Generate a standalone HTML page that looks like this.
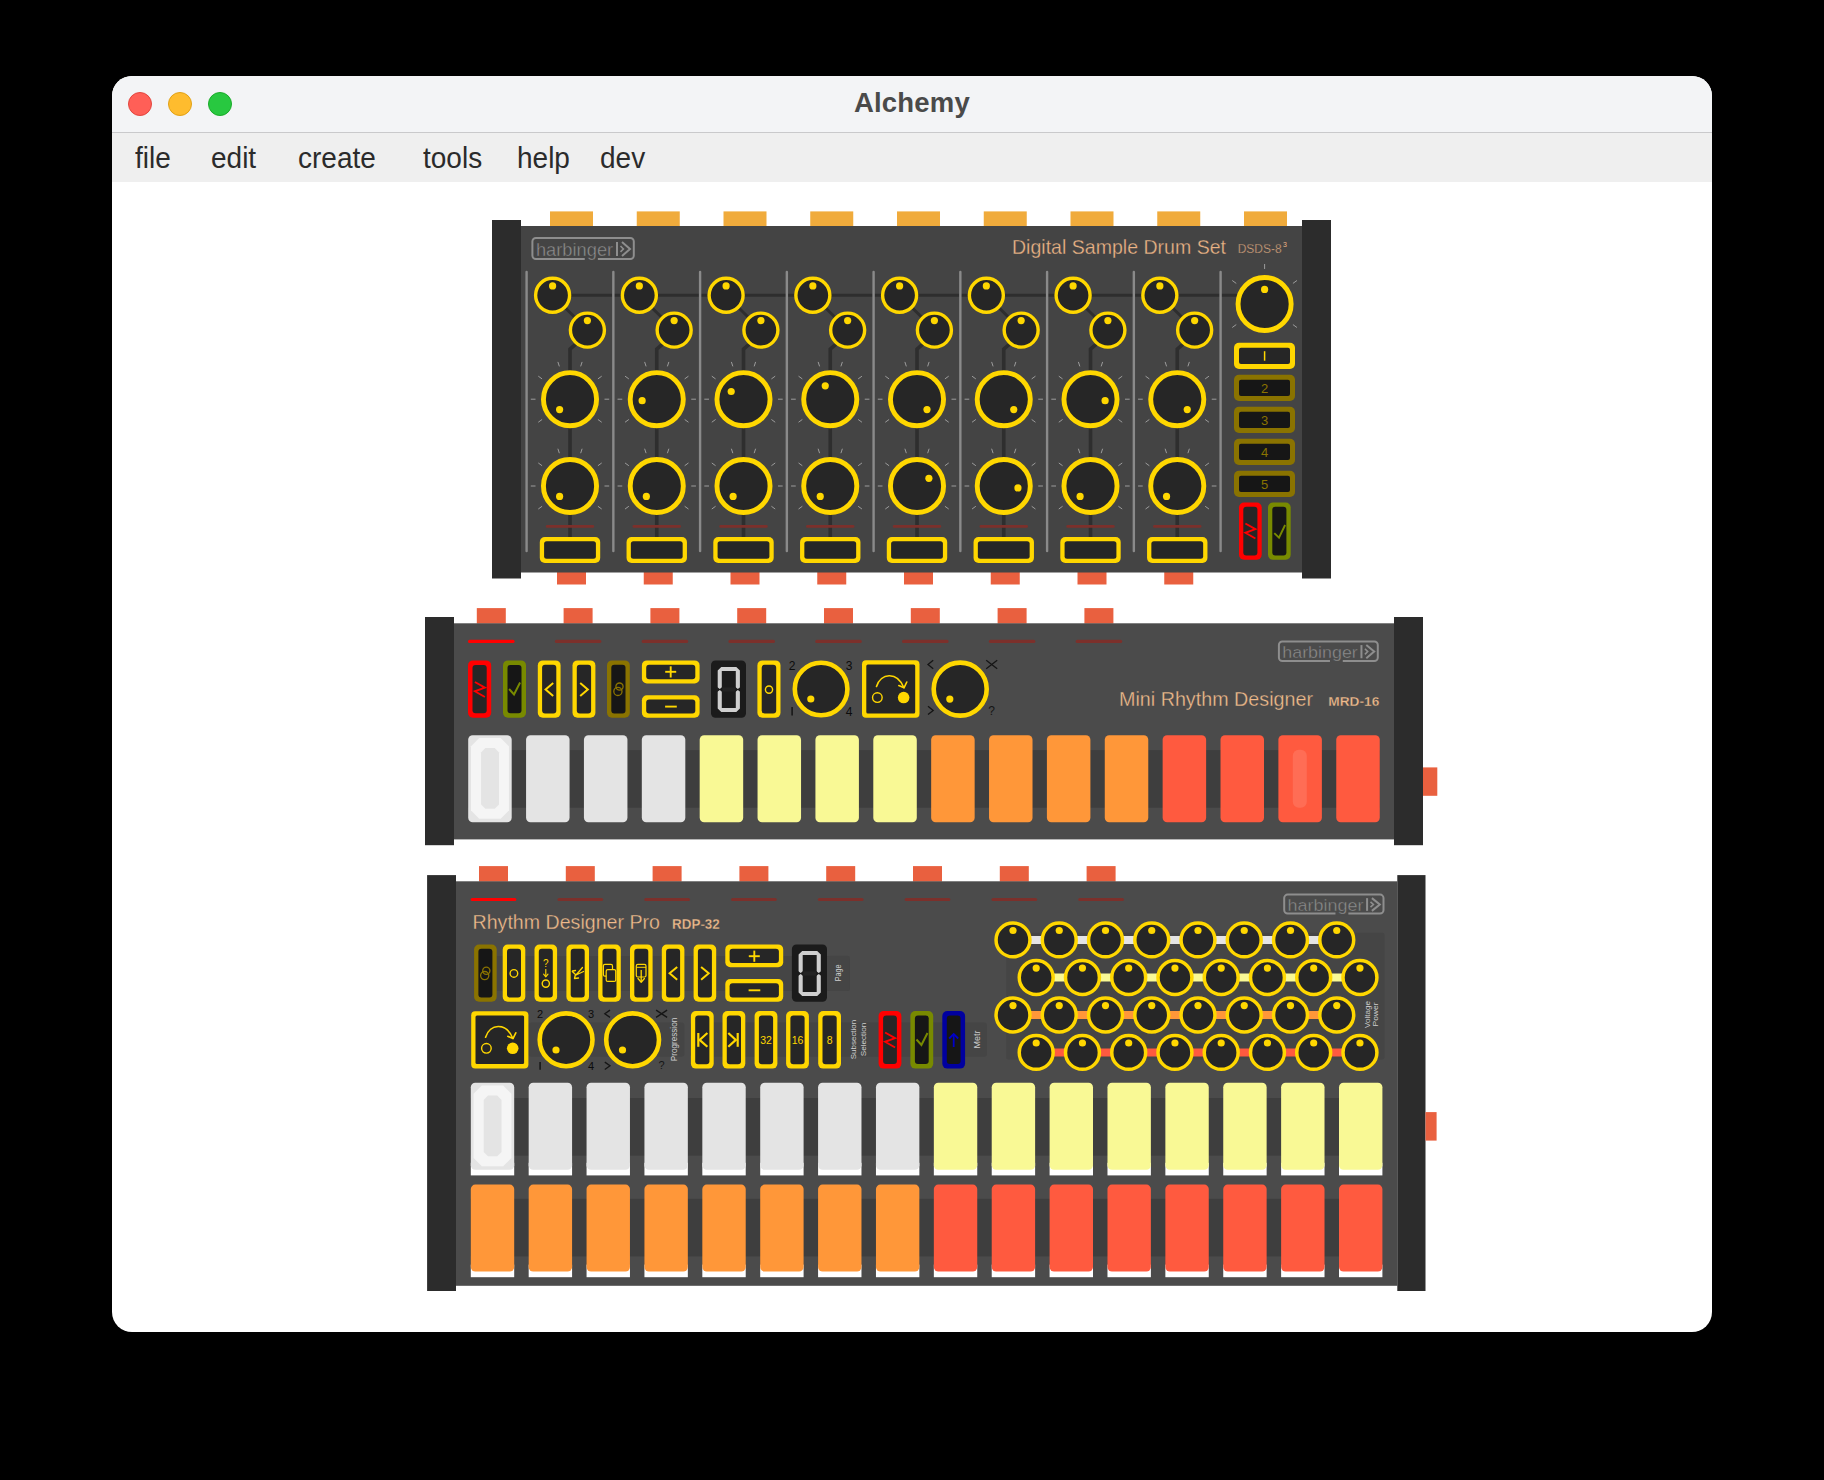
<!DOCTYPE html>
<html><head><meta charset="utf-8"><style>
html,body{margin:0;padding:0;background:#000;width:1824px;height:1480px;overflow:hidden;font-family:"Liberation Sans", sans-serif}
.win{position:absolute;left:112px;top:76px;width:1600px;height:1256px;border-radius:20px;overflow:hidden;background:#fff}
.title{position:absolute;left:0;top:0;width:1600px;height:57.2px;background:#f3f4f6;border-bottom:1.5px solid #c9c9cb;box-sizing:border-box}
.title .t{position:absolute;left:0;width:1600px;top:10.5px;text-align:center;font-weight:bold;font-size:27.5px;color:#4a4a4a;letter-spacing:0.2px}
.dot{position:absolute;top:16px;width:24px;height:24px;border-radius:50%;box-sizing:border-box}
.menu{position:absolute;left:0;top:57.2px;width:1600px;height:48.8px;background:#efefef}
.menu span{position:absolute;top:7.8px;font-size:28px;color:#2b2b2b;transform:scaleY(1.07);transform-origin:0 0}
svg{position:absolute;left:0;top:0}
</style></head><body>
<div class="win">
<div class="title">
<div class="dot" style="left:16px;background:#ff5f57;border:1px solid #e2463f"></div>
<div class="dot" style="left:56px;background:#febc2e;border:1px solid #e1a116"></div>
<div class="dot" style="left:96px;background:#28c840;border:1px solid #1aab29"></div>
<div class="t">Alchemy</div>
</div>
<div class="menu">
<span style="left:23px">file</span><span style="left:99px">edit</span><span style="left:186px">create</span><span style="left:311px">tools</span><span style="left:405px">help</span><span style="left:488px">dev</span>
</div>
</div>
<svg width="1824" height="1480" viewBox="0 0 1824 1480">
<rect x="550.00" y="211.40" width="43.00" height="15.00" rx="0" fill="#f0ab3c" />
<rect x="636.75" y="211.40" width="43.00" height="15.00" rx="0" fill="#f0ab3c" />
<rect x="723.50" y="211.40" width="43.00" height="15.00" rx="0" fill="#f0ab3c" />
<rect x="810.25" y="211.40" width="43.00" height="15.00" rx="0" fill="#f0ab3c" />
<rect x="897.00" y="211.40" width="43.00" height="15.00" rx="0" fill="#f0ab3c" />
<rect x="983.75" y="211.40" width="43.00" height="15.00" rx="0" fill="#f0ab3c" />
<rect x="1070.50" y="211.40" width="43.00" height="15.00" rx="0" fill="#f0ab3c" />
<rect x="1157.25" y="211.40" width="43.00" height="15.00" rx="0" fill="#f0ab3c" />
<rect x="1244.00" y="211.40" width="43.00" height="15.00" rx="0" fill="#f0ab3c" />
<rect x="557.00" y="572.00" width="29.00" height="12.50" rx="0" fill="#e9603f" />
<rect x="643.75" y="572.00" width="29.00" height="12.50" rx="0" fill="#e9603f" />
<rect x="730.50" y="572.00" width="29.00" height="12.50" rx="0" fill="#e9603f" />
<rect x="817.25" y="572.00" width="29.00" height="12.50" rx="0" fill="#e9603f" />
<rect x="904.00" y="572.00" width="29.00" height="12.50" rx="0" fill="#e9603f" />
<rect x="990.75" y="572.00" width="29.00" height="12.50" rx="0" fill="#e9603f" />
<rect x="1077.50" y="572.00" width="29.00" height="12.50" rx="0" fill="#e9603f" />
<rect x="1164.25" y="572.00" width="29.00" height="12.50" rx="0" fill="#e9603f" />
<rect x="521.00" y="226.00" width="781.00" height="346.50" rx="0" fill="#444444" />
<rect x="492.00" y="220.00" width="29.00" height="358.50" rx="0" fill="#2c2c2c" />
<rect x="1302.00" y="220.00" width="29.00" height="358.50" rx="0" fill="#2c2c2c" />
<rect x="532.40" y="238.00" width="101.40" height="21.00" rx="3.5" fill="none" stroke="#8e8e8e" stroke-width="2"/>
<rect x="584.75" y="257.00" width="13.13" height="4.00" rx="0" fill="#444444" />
<text x="535.90" y="256.00" font-family='"Liberation Sans", sans-serif' font-size="17.9" fill="#8e8e8e" text-anchor="start" font-weight="normal" textLength="77.3" lengthAdjust="spacingAndGlyphs" stroke="#444444" stroke-width="0.4">harbinger</text>
<line x1="617.02" y1="241.99" x2="617.02" y2="256.00" stroke="#8e8e8e" stroke-width="2" stroke-linecap="butt"/>
<path d="M622.0,242.0 L630.0,249.0 L622.0,256.0" fill="none" stroke="#8e8e8e" stroke-width="2" stroke-linecap="butt" stroke-linejoin="miter"/>
<path d="M620.5,246.0 L623.4,249.0 L620.5,251.9" fill="none" stroke="#8e8e8e" stroke-width="1.6" stroke-linecap="butt" stroke-linejoin="miter"/>
<text x="1226.00" y="253.60" font-family='"Liberation Sans", sans-serif' font-size="21" fill="#ecb486" text-anchor="end" font-weight="normal" textLength="214" lengthAdjust="spacingAndGlyphs" stroke="#444444" stroke-width="0.3">Digital Sample Drum Set</text>
<text x="1237.70" y="253.20" font-family='"Liberation Sans", sans-serif' font-size="13" fill="#ecb486" text-anchor="start" font-weight="normal" textLength="44" lengthAdjust="spacingAndGlyphs" stroke="#444444" stroke-width="0.4">DSDS-8</text>
<text x="1283.00" y="246.50" font-family='"Liberation Sans", sans-serif' font-size="7" fill="#ecb486" text-anchor="start" font-weight="normal" >3</text>
<line x1="552.60" y1="295.30" x2="1240.00" y2="295.30" stroke="#2e2e2e" stroke-width="3.0" stroke-linecap="butt"/>
<line x1="552.60" y1="295.30" x2="587.60" y2="330.00" stroke="#2e2e2e" stroke-width="3" stroke-linecap="butt"/>
<path d="M586.60,335 L570.00,349 L570.00,540" fill="none" stroke="#2e2e2e" stroke-width="3.6" stroke-linecap="butt" stroke-linejoin="miter"/>
<line x1="547.10" y1="526.40" x2="592.90" y2="526.40" stroke="#7c302b" stroke-width="2.6" stroke-linecap="round"/>
<circle cx="552.60" cy="295.20" r="17.00" fill="#262626" stroke="#ffd700" stroke-width="3.4"/>
<circle cx="552.60" cy="285.90" r="3.60" fill="#ffd700"/>
<circle cx="587.40" cy="330.10" r="17.00" fill="#262626" stroke="#ffd700" stroke-width="3.4"/>
<circle cx="587.40" cy="320.60" r="3.60" fill="#ffd700"/>
<line x1="580.66" y1="366.39" x2="582.11" y2="361.92" stroke="#9c9c9c" stroke-width="1.0" stroke-linecap="butt"/>
<line x1="597.91" y1="378.92" x2="601.71" y2="376.16" stroke="#9c9c9c" stroke-width="1.0" stroke-linecap="butt"/>
<line x1="604.50" y1="399.20" x2="609.20" y2="399.20" stroke="#9c9c9c" stroke-width="1.0" stroke-linecap="butt"/>
<line x1="597.91" y1="419.48" x2="601.71" y2="422.24" stroke="#9c9c9c" stroke-width="1.0" stroke-linecap="butt"/>
<line x1="559.34" y1="366.39" x2="557.89" y2="361.92" stroke="#9c9c9c" stroke-width="1.0" stroke-linecap="butt"/>
<line x1="542.09" y1="378.92" x2="538.29" y2="376.16" stroke="#9c9c9c" stroke-width="1.0" stroke-linecap="butt"/>
<line x1="535.50" y1="399.20" x2="530.80" y2="399.20" stroke="#9c9c9c" stroke-width="1.0" stroke-linecap="butt"/>
<line x1="542.09" y1="419.48" x2="538.29" y2="422.24" stroke="#9c9c9c" stroke-width="1.0" stroke-linecap="butt"/>
<circle cx="570.00" cy="399.20" r="26.55" fill="#262626" stroke="#ffd700" stroke-width="4.9"/>
<circle cx="559.60" cy="409.60" r="3.60" fill="#ffd700"/>
<line x1="580.66" y1="453.19" x2="582.11" y2="448.72" stroke="#9c9c9c" stroke-width="1.0" stroke-linecap="butt"/>
<line x1="597.91" y1="465.72" x2="601.71" y2="462.96" stroke="#9c9c9c" stroke-width="1.0" stroke-linecap="butt"/>
<line x1="604.50" y1="486.00" x2="609.20" y2="486.00" stroke="#9c9c9c" stroke-width="1.0" stroke-linecap="butt"/>
<line x1="597.91" y1="506.28" x2="601.71" y2="509.04" stroke="#9c9c9c" stroke-width="1.0" stroke-linecap="butt"/>
<line x1="559.34" y1="453.19" x2="557.89" y2="448.72" stroke="#9c9c9c" stroke-width="1.0" stroke-linecap="butt"/>
<line x1="542.09" y1="465.72" x2="538.29" y2="462.96" stroke="#9c9c9c" stroke-width="1.0" stroke-linecap="butt"/>
<line x1="535.50" y1="486.00" x2="530.80" y2="486.00" stroke="#9c9c9c" stroke-width="1.0" stroke-linecap="butt"/>
<line x1="542.09" y1="506.28" x2="538.29" y2="509.04" stroke="#9c9c9c" stroke-width="1.0" stroke-linecap="butt"/>
<circle cx="570.00" cy="486.00" r="26.55" fill="#262626" stroke="#ffd700" stroke-width="4.9"/>
<circle cx="559.60" cy="496.40" r="3.60" fill="#ffd700"/>
<rect x="539.80" y="537.00" width="60.40" height="26.00" rx="5" fill="#ffd700" />
<rect x="544.10" y="541.30" width="51.80" height="17.40" rx="2.5" fill="#262626" />
<line x1="639.35" y1="295.30" x2="674.35" y2="330.00" stroke="#2e2e2e" stroke-width="3" stroke-linecap="butt"/>
<path d="M673.35,335 L656.75,349 L656.75,540" fill="none" stroke="#2e2e2e" stroke-width="3.6" stroke-linecap="butt" stroke-linejoin="miter"/>
<line x1="633.85" y1="526.40" x2="679.65" y2="526.40" stroke="#7c302b" stroke-width="2.6" stroke-linecap="round"/>
<circle cx="639.35" cy="295.20" r="17.00" fill="#262626" stroke="#ffd700" stroke-width="3.4"/>
<circle cx="639.35" cy="285.90" r="3.60" fill="#ffd700"/>
<circle cx="674.15" cy="330.10" r="17.00" fill="#262626" stroke="#ffd700" stroke-width="3.4"/>
<circle cx="674.15" cy="320.60" r="3.60" fill="#ffd700"/>
<line x1="667.41" y1="366.39" x2="668.86" y2="361.92" stroke="#9c9c9c" stroke-width="1.0" stroke-linecap="butt"/>
<line x1="684.66" y1="378.92" x2="688.46" y2="376.16" stroke="#9c9c9c" stroke-width="1.0" stroke-linecap="butt"/>
<line x1="691.25" y1="399.20" x2="695.95" y2="399.20" stroke="#9c9c9c" stroke-width="1.0" stroke-linecap="butt"/>
<line x1="684.66" y1="419.48" x2="688.46" y2="422.24" stroke="#9c9c9c" stroke-width="1.0" stroke-linecap="butt"/>
<line x1="646.09" y1="366.39" x2="644.64" y2="361.92" stroke="#9c9c9c" stroke-width="1.0" stroke-linecap="butt"/>
<line x1="628.84" y1="378.92" x2="625.04" y2="376.16" stroke="#9c9c9c" stroke-width="1.0" stroke-linecap="butt"/>
<line x1="622.25" y1="399.20" x2="617.55" y2="399.20" stroke="#9c9c9c" stroke-width="1.0" stroke-linecap="butt"/>
<line x1="628.84" y1="419.48" x2="625.04" y2="422.24" stroke="#9c9c9c" stroke-width="1.0" stroke-linecap="butt"/>
<circle cx="656.75" cy="399.20" r="26.55" fill="#262626" stroke="#ffd700" stroke-width="4.9"/>
<circle cx="642.15" cy="400.70" r="3.60" fill="#ffd700"/>
<line x1="667.41" y1="453.19" x2="668.86" y2="448.72" stroke="#9c9c9c" stroke-width="1.0" stroke-linecap="butt"/>
<line x1="684.66" y1="465.72" x2="688.46" y2="462.96" stroke="#9c9c9c" stroke-width="1.0" stroke-linecap="butt"/>
<line x1="691.25" y1="486.00" x2="695.95" y2="486.00" stroke="#9c9c9c" stroke-width="1.0" stroke-linecap="butt"/>
<line x1="684.66" y1="506.28" x2="688.46" y2="509.04" stroke="#9c9c9c" stroke-width="1.0" stroke-linecap="butt"/>
<line x1="646.09" y1="453.19" x2="644.64" y2="448.72" stroke="#9c9c9c" stroke-width="1.0" stroke-linecap="butt"/>
<line x1="628.84" y1="465.72" x2="625.04" y2="462.96" stroke="#9c9c9c" stroke-width="1.0" stroke-linecap="butt"/>
<line x1="622.25" y1="486.00" x2="617.55" y2="486.00" stroke="#9c9c9c" stroke-width="1.0" stroke-linecap="butt"/>
<line x1="628.84" y1="506.28" x2="625.04" y2="509.04" stroke="#9c9c9c" stroke-width="1.0" stroke-linecap="butt"/>
<circle cx="656.75" cy="486.00" r="26.55" fill="#262626" stroke="#ffd700" stroke-width="4.9"/>
<circle cx="646.35" cy="496.40" r="3.60" fill="#ffd700"/>
<rect x="626.55" y="537.00" width="60.40" height="26.00" rx="5" fill="#ffd700" />
<rect x="630.85" y="541.30" width="51.80" height="17.40" rx="2.5" fill="#262626" />
<line x1="726.10" y1="295.30" x2="761.10" y2="330.00" stroke="#2e2e2e" stroke-width="3" stroke-linecap="butt"/>
<path d="M760.10,335 L743.50,349 L743.50,540" fill="none" stroke="#2e2e2e" stroke-width="3.6" stroke-linecap="butt" stroke-linejoin="miter"/>
<line x1="720.60" y1="526.40" x2="766.40" y2="526.40" stroke="#7c302b" stroke-width="2.6" stroke-linecap="round"/>
<circle cx="726.10" cy="295.20" r="17.00" fill="#262626" stroke="#ffd700" stroke-width="3.4"/>
<circle cx="726.10" cy="285.90" r="3.60" fill="#ffd700"/>
<circle cx="760.90" cy="330.10" r="17.00" fill="#262626" stroke="#ffd700" stroke-width="3.4"/>
<circle cx="760.90" cy="320.60" r="3.60" fill="#ffd700"/>
<line x1="754.16" y1="366.39" x2="755.61" y2="361.92" stroke="#9c9c9c" stroke-width="1.0" stroke-linecap="butt"/>
<line x1="771.41" y1="378.92" x2="775.21" y2="376.16" stroke="#9c9c9c" stroke-width="1.0" stroke-linecap="butt"/>
<line x1="778.00" y1="399.20" x2="782.70" y2="399.20" stroke="#9c9c9c" stroke-width="1.0" stroke-linecap="butt"/>
<line x1="771.41" y1="419.48" x2="775.21" y2="422.24" stroke="#9c9c9c" stroke-width="1.0" stroke-linecap="butt"/>
<line x1="732.84" y1="366.39" x2="731.39" y2="361.92" stroke="#9c9c9c" stroke-width="1.0" stroke-linecap="butt"/>
<line x1="715.59" y1="378.92" x2="711.79" y2="376.16" stroke="#9c9c9c" stroke-width="1.0" stroke-linecap="butt"/>
<line x1="709.00" y1="399.20" x2="704.30" y2="399.20" stroke="#9c9c9c" stroke-width="1.0" stroke-linecap="butt"/>
<line x1="715.59" y1="419.48" x2="711.79" y2="422.24" stroke="#9c9c9c" stroke-width="1.0" stroke-linecap="butt"/>
<circle cx="743.50" cy="399.20" r="26.55" fill="#262626" stroke="#ffd700" stroke-width="4.9"/>
<circle cx="731.20" cy="391.50" r="3.60" fill="#ffd700"/>
<line x1="754.16" y1="453.19" x2="755.61" y2="448.72" stroke="#9c9c9c" stroke-width="1.0" stroke-linecap="butt"/>
<line x1="771.41" y1="465.72" x2="775.21" y2="462.96" stroke="#9c9c9c" stroke-width="1.0" stroke-linecap="butt"/>
<line x1="778.00" y1="486.00" x2="782.70" y2="486.00" stroke="#9c9c9c" stroke-width="1.0" stroke-linecap="butt"/>
<line x1="771.41" y1="506.28" x2="775.21" y2="509.04" stroke="#9c9c9c" stroke-width="1.0" stroke-linecap="butt"/>
<line x1="732.84" y1="453.19" x2="731.39" y2="448.72" stroke="#9c9c9c" stroke-width="1.0" stroke-linecap="butt"/>
<line x1="715.59" y1="465.72" x2="711.79" y2="462.96" stroke="#9c9c9c" stroke-width="1.0" stroke-linecap="butt"/>
<line x1="709.00" y1="486.00" x2="704.30" y2="486.00" stroke="#9c9c9c" stroke-width="1.0" stroke-linecap="butt"/>
<line x1="715.59" y1="506.28" x2="711.79" y2="509.04" stroke="#9c9c9c" stroke-width="1.0" stroke-linecap="butt"/>
<circle cx="743.50" cy="486.00" r="26.55" fill="#262626" stroke="#ffd700" stroke-width="4.9"/>
<circle cx="733.10" cy="496.40" r="3.60" fill="#ffd700"/>
<rect x="713.30" y="537.00" width="60.40" height="26.00" rx="5" fill="#ffd700" />
<rect x="717.60" y="541.30" width="51.80" height="17.40" rx="2.5" fill="#262626" />
<line x1="812.85" y1="295.30" x2="847.85" y2="330.00" stroke="#2e2e2e" stroke-width="3" stroke-linecap="butt"/>
<path d="M846.85,335 L830.25,349 L830.25,540" fill="none" stroke="#2e2e2e" stroke-width="3.6" stroke-linecap="butt" stroke-linejoin="miter"/>
<line x1="807.35" y1="526.40" x2="853.15" y2="526.40" stroke="#7c302b" stroke-width="2.6" stroke-linecap="round"/>
<circle cx="812.85" cy="295.20" r="17.00" fill="#262626" stroke="#ffd700" stroke-width="3.4"/>
<circle cx="812.85" cy="285.90" r="3.60" fill="#ffd700"/>
<circle cx="847.65" cy="330.10" r="17.00" fill="#262626" stroke="#ffd700" stroke-width="3.4"/>
<circle cx="847.65" cy="320.60" r="3.60" fill="#ffd700"/>
<line x1="840.91" y1="366.39" x2="842.36" y2="361.92" stroke="#9c9c9c" stroke-width="1.0" stroke-linecap="butt"/>
<line x1="858.16" y1="378.92" x2="861.96" y2="376.16" stroke="#9c9c9c" stroke-width="1.0" stroke-linecap="butt"/>
<line x1="864.75" y1="399.20" x2="869.45" y2="399.20" stroke="#9c9c9c" stroke-width="1.0" stroke-linecap="butt"/>
<line x1="858.16" y1="419.48" x2="861.96" y2="422.24" stroke="#9c9c9c" stroke-width="1.0" stroke-linecap="butt"/>
<line x1="819.59" y1="366.39" x2="818.14" y2="361.92" stroke="#9c9c9c" stroke-width="1.0" stroke-linecap="butt"/>
<line x1="802.34" y1="378.92" x2="798.54" y2="376.16" stroke="#9c9c9c" stroke-width="1.0" stroke-linecap="butt"/>
<line x1="795.75" y1="399.20" x2="791.05" y2="399.20" stroke="#9c9c9c" stroke-width="1.0" stroke-linecap="butt"/>
<line x1="802.34" y1="419.48" x2="798.54" y2="422.24" stroke="#9c9c9c" stroke-width="1.0" stroke-linecap="butt"/>
<circle cx="830.25" cy="399.20" r="26.55" fill="#262626" stroke="#ffd700" stroke-width="4.9"/>
<circle cx="825.25" cy="385.80" r="3.60" fill="#ffd700"/>
<line x1="840.91" y1="453.19" x2="842.36" y2="448.72" stroke="#9c9c9c" stroke-width="1.0" stroke-linecap="butt"/>
<line x1="858.16" y1="465.72" x2="861.96" y2="462.96" stroke="#9c9c9c" stroke-width="1.0" stroke-linecap="butt"/>
<line x1="864.75" y1="486.00" x2="869.45" y2="486.00" stroke="#9c9c9c" stroke-width="1.0" stroke-linecap="butt"/>
<line x1="858.16" y1="506.28" x2="861.96" y2="509.04" stroke="#9c9c9c" stroke-width="1.0" stroke-linecap="butt"/>
<line x1="819.59" y1="453.19" x2="818.14" y2="448.72" stroke="#9c9c9c" stroke-width="1.0" stroke-linecap="butt"/>
<line x1="802.34" y1="465.72" x2="798.54" y2="462.96" stroke="#9c9c9c" stroke-width="1.0" stroke-linecap="butt"/>
<line x1="795.75" y1="486.00" x2="791.05" y2="486.00" stroke="#9c9c9c" stroke-width="1.0" stroke-linecap="butt"/>
<line x1="802.34" y1="506.28" x2="798.54" y2="509.04" stroke="#9c9c9c" stroke-width="1.0" stroke-linecap="butt"/>
<circle cx="830.25" cy="486.00" r="26.55" fill="#262626" stroke="#ffd700" stroke-width="4.9"/>
<circle cx="820.25" cy="496.40" r="3.60" fill="#ffd700"/>
<rect x="800.05" y="537.00" width="60.40" height="26.00" rx="5" fill="#ffd700" />
<rect x="804.35" y="541.30" width="51.80" height="17.40" rx="2.5" fill="#262626" />
<line x1="899.60" y1="295.30" x2="934.60" y2="330.00" stroke="#2e2e2e" stroke-width="3" stroke-linecap="butt"/>
<path d="M933.60,335 L917.00,349 L917.00,540" fill="none" stroke="#2e2e2e" stroke-width="3.6" stroke-linecap="butt" stroke-linejoin="miter"/>
<line x1="894.10" y1="526.40" x2="939.90" y2="526.40" stroke="#7c302b" stroke-width="2.6" stroke-linecap="round"/>
<circle cx="899.60" cy="295.20" r="17.00" fill="#262626" stroke="#ffd700" stroke-width="3.4"/>
<circle cx="899.60" cy="285.90" r="3.60" fill="#ffd700"/>
<circle cx="934.40" cy="330.10" r="17.00" fill="#262626" stroke="#ffd700" stroke-width="3.4"/>
<circle cx="934.40" cy="320.60" r="3.60" fill="#ffd700"/>
<line x1="927.66" y1="366.39" x2="929.11" y2="361.92" stroke="#9c9c9c" stroke-width="1.0" stroke-linecap="butt"/>
<line x1="944.91" y1="378.92" x2="948.71" y2="376.16" stroke="#9c9c9c" stroke-width="1.0" stroke-linecap="butt"/>
<line x1="951.50" y1="399.20" x2="956.20" y2="399.20" stroke="#9c9c9c" stroke-width="1.0" stroke-linecap="butt"/>
<line x1="944.91" y1="419.48" x2="948.71" y2="422.24" stroke="#9c9c9c" stroke-width="1.0" stroke-linecap="butt"/>
<line x1="906.34" y1="366.39" x2="904.89" y2="361.92" stroke="#9c9c9c" stroke-width="1.0" stroke-linecap="butt"/>
<line x1="889.09" y1="378.92" x2="885.29" y2="376.16" stroke="#9c9c9c" stroke-width="1.0" stroke-linecap="butt"/>
<line x1="882.50" y1="399.20" x2="877.80" y2="399.20" stroke="#9c9c9c" stroke-width="1.0" stroke-linecap="butt"/>
<line x1="889.09" y1="419.48" x2="885.29" y2="422.24" stroke="#9c9c9c" stroke-width="1.0" stroke-linecap="butt"/>
<circle cx="917.00" cy="399.20" r="26.55" fill="#262626" stroke="#ffd700" stroke-width="4.9"/>
<circle cx="927.00" cy="409.60" r="3.60" fill="#ffd700"/>
<line x1="927.66" y1="453.19" x2="929.11" y2="448.72" stroke="#9c9c9c" stroke-width="1.0" stroke-linecap="butt"/>
<line x1="944.91" y1="465.72" x2="948.71" y2="462.96" stroke="#9c9c9c" stroke-width="1.0" stroke-linecap="butt"/>
<line x1="951.50" y1="486.00" x2="956.20" y2="486.00" stroke="#9c9c9c" stroke-width="1.0" stroke-linecap="butt"/>
<line x1="944.91" y1="506.28" x2="948.71" y2="509.04" stroke="#9c9c9c" stroke-width="1.0" stroke-linecap="butt"/>
<line x1="906.34" y1="453.19" x2="904.89" y2="448.72" stroke="#9c9c9c" stroke-width="1.0" stroke-linecap="butt"/>
<line x1="889.09" y1="465.72" x2="885.29" y2="462.96" stroke="#9c9c9c" stroke-width="1.0" stroke-linecap="butt"/>
<line x1="882.50" y1="486.00" x2="877.80" y2="486.00" stroke="#9c9c9c" stroke-width="1.0" stroke-linecap="butt"/>
<line x1="889.09" y1="506.28" x2="885.29" y2="509.04" stroke="#9c9c9c" stroke-width="1.0" stroke-linecap="butt"/>
<circle cx="917.00" cy="486.00" r="26.55" fill="#262626" stroke="#ffd700" stroke-width="4.9"/>
<circle cx="928.90" cy="478.30" r="3.60" fill="#ffd700"/>
<rect x="886.80" y="537.00" width="60.40" height="26.00" rx="5" fill="#ffd700" />
<rect x="891.10" y="541.30" width="51.80" height="17.40" rx="2.5" fill="#262626" />
<line x1="986.35" y1="295.30" x2="1021.35" y2="330.00" stroke="#2e2e2e" stroke-width="3" stroke-linecap="butt"/>
<path d="M1020.35,335 L1003.75,349 L1003.75,540" fill="none" stroke="#2e2e2e" stroke-width="3.6" stroke-linecap="butt" stroke-linejoin="miter"/>
<line x1="980.85" y1="526.40" x2="1026.65" y2="526.40" stroke="#7c302b" stroke-width="2.6" stroke-linecap="round"/>
<circle cx="986.35" cy="295.20" r="17.00" fill="#262626" stroke="#ffd700" stroke-width="3.4"/>
<circle cx="986.35" cy="285.90" r="3.60" fill="#ffd700"/>
<circle cx="1021.15" cy="330.10" r="17.00" fill="#262626" stroke="#ffd700" stroke-width="3.4"/>
<circle cx="1021.15" cy="320.60" r="3.60" fill="#ffd700"/>
<line x1="1014.41" y1="366.39" x2="1015.86" y2="361.92" stroke="#9c9c9c" stroke-width="1.0" stroke-linecap="butt"/>
<line x1="1031.66" y1="378.92" x2="1035.46" y2="376.16" stroke="#9c9c9c" stroke-width="1.0" stroke-linecap="butt"/>
<line x1="1038.25" y1="399.20" x2="1042.95" y2="399.20" stroke="#9c9c9c" stroke-width="1.0" stroke-linecap="butt"/>
<line x1="1031.66" y1="419.48" x2="1035.46" y2="422.24" stroke="#9c9c9c" stroke-width="1.0" stroke-linecap="butt"/>
<line x1="993.09" y1="366.39" x2="991.64" y2="361.92" stroke="#9c9c9c" stroke-width="1.0" stroke-linecap="butt"/>
<line x1="975.84" y1="378.92" x2="972.04" y2="376.16" stroke="#9c9c9c" stroke-width="1.0" stroke-linecap="butt"/>
<line x1="969.25" y1="399.20" x2="964.55" y2="399.20" stroke="#9c9c9c" stroke-width="1.0" stroke-linecap="butt"/>
<line x1="975.84" y1="419.48" x2="972.04" y2="422.24" stroke="#9c9c9c" stroke-width="1.0" stroke-linecap="butt"/>
<circle cx="1003.75" cy="399.20" r="26.55" fill="#262626" stroke="#ffd700" stroke-width="4.9"/>
<circle cx="1013.75" cy="409.60" r="3.60" fill="#ffd700"/>
<line x1="1014.41" y1="453.19" x2="1015.86" y2="448.72" stroke="#9c9c9c" stroke-width="1.0" stroke-linecap="butt"/>
<line x1="1031.66" y1="465.72" x2="1035.46" y2="462.96" stroke="#9c9c9c" stroke-width="1.0" stroke-linecap="butt"/>
<line x1="1038.25" y1="486.00" x2="1042.95" y2="486.00" stroke="#9c9c9c" stroke-width="1.0" stroke-linecap="butt"/>
<line x1="1031.66" y1="506.28" x2="1035.46" y2="509.04" stroke="#9c9c9c" stroke-width="1.0" stroke-linecap="butt"/>
<line x1="993.09" y1="453.19" x2="991.64" y2="448.72" stroke="#9c9c9c" stroke-width="1.0" stroke-linecap="butt"/>
<line x1="975.84" y1="465.72" x2="972.04" y2="462.96" stroke="#9c9c9c" stroke-width="1.0" stroke-linecap="butt"/>
<line x1="969.25" y1="486.00" x2="964.55" y2="486.00" stroke="#9c9c9c" stroke-width="1.0" stroke-linecap="butt"/>
<line x1="975.84" y1="506.28" x2="972.04" y2="509.04" stroke="#9c9c9c" stroke-width="1.0" stroke-linecap="butt"/>
<circle cx="1003.75" cy="486.00" r="26.55" fill="#262626" stroke="#ffd700" stroke-width="4.9"/>
<circle cx="1017.95" cy="487.90" r="3.60" fill="#ffd700"/>
<rect x="973.55" y="537.00" width="60.40" height="26.00" rx="5" fill="#ffd700" />
<rect x="977.85" y="541.30" width="51.80" height="17.40" rx="2.5" fill="#262626" />
<line x1="1073.10" y1="295.30" x2="1108.10" y2="330.00" stroke="#2e2e2e" stroke-width="3" stroke-linecap="butt"/>
<path d="M1107.10,335 L1090.50,349 L1090.50,540" fill="none" stroke="#2e2e2e" stroke-width="3.6" stroke-linecap="butt" stroke-linejoin="miter"/>
<line x1="1067.60" y1="526.40" x2="1113.40" y2="526.40" stroke="#7c302b" stroke-width="2.6" stroke-linecap="round"/>
<circle cx="1073.10" cy="295.20" r="17.00" fill="#262626" stroke="#ffd700" stroke-width="3.4"/>
<circle cx="1073.10" cy="285.90" r="3.60" fill="#ffd700"/>
<circle cx="1107.90" cy="330.10" r="17.00" fill="#262626" stroke="#ffd700" stroke-width="3.4"/>
<circle cx="1107.90" cy="320.60" r="3.60" fill="#ffd700"/>
<line x1="1101.16" y1="366.39" x2="1102.61" y2="361.92" stroke="#9c9c9c" stroke-width="1.0" stroke-linecap="butt"/>
<line x1="1118.41" y1="378.92" x2="1122.21" y2="376.16" stroke="#9c9c9c" stroke-width="1.0" stroke-linecap="butt"/>
<line x1="1125.00" y1="399.20" x2="1129.70" y2="399.20" stroke="#9c9c9c" stroke-width="1.0" stroke-linecap="butt"/>
<line x1="1118.41" y1="419.48" x2="1122.21" y2="422.24" stroke="#9c9c9c" stroke-width="1.0" stroke-linecap="butt"/>
<line x1="1079.84" y1="366.39" x2="1078.39" y2="361.92" stroke="#9c9c9c" stroke-width="1.0" stroke-linecap="butt"/>
<line x1="1062.59" y1="378.92" x2="1058.79" y2="376.16" stroke="#9c9c9c" stroke-width="1.0" stroke-linecap="butt"/>
<line x1="1056.00" y1="399.20" x2="1051.30" y2="399.20" stroke="#9c9c9c" stroke-width="1.0" stroke-linecap="butt"/>
<line x1="1062.59" y1="419.48" x2="1058.79" y2="422.24" stroke="#9c9c9c" stroke-width="1.0" stroke-linecap="butt"/>
<circle cx="1090.50" cy="399.20" r="26.55" fill="#262626" stroke="#ffd700" stroke-width="4.9"/>
<circle cx="1105.10" cy="400.70" r="3.60" fill="#ffd700"/>
<line x1="1101.16" y1="453.19" x2="1102.61" y2="448.72" stroke="#9c9c9c" stroke-width="1.0" stroke-linecap="butt"/>
<line x1="1118.41" y1="465.72" x2="1122.21" y2="462.96" stroke="#9c9c9c" stroke-width="1.0" stroke-linecap="butt"/>
<line x1="1125.00" y1="486.00" x2="1129.70" y2="486.00" stroke="#9c9c9c" stroke-width="1.0" stroke-linecap="butt"/>
<line x1="1118.41" y1="506.28" x2="1122.21" y2="509.04" stroke="#9c9c9c" stroke-width="1.0" stroke-linecap="butt"/>
<line x1="1079.84" y1="453.19" x2="1078.39" y2="448.72" stroke="#9c9c9c" stroke-width="1.0" stroke-linecap="butt"/>
<line x1="1062.59" y1="465.72" x2="1058.79" y2="462.96" stroke="#9c9c9c" stroke-width="1.0" stroke-linecap="butt"/>
<line x1="1056.00" y1="486.00" x2="1051.30" y2="486.00" stroke="#9c9c9c" stroke-width="1.0" stroke-linecap="butt"/>
<line x1="1062.59" y1="506.28" x2="1058.79" y2="509.04" stroke="#9c9c9c" stroke-width="1.0" stroke-linecap="butt"/>
<circle cx="1090.50" cy="486.00" r="26.55" fill="#262626" stroke="#ffd700" stroke-width="4.9"/>
<circle cx="1080.10" cy="496.40" r="3.60" fill="#ffd700"/>
<rect x="1060.30" y="537.00" width="60.40" height="26.00" rx="5" fill="#ffd700" />
<rect x="1064.60" y="541.30" width="51.80" height="17.40" rx="2.5" fill="#262626" />
<line x1="1159.85" y1="295.30" x2="1194.85" y2="330.00" stroke="#2e2e2e" stroke-width="3" stroke-linecap="butt"/>
<path d="M1193.85,335 L1177.25,349 L1177.25,540" fill="none" stroke="#2e2e2e" stroke-width="3.6" stroke-linecap="butt" stroke-linejoin="miter"/>
<line x1="1154.35" y1="526.40" x2="1200.15" y2="526.40" stroke="#7c302b" stroke-width="2.6" stroke-linecap="round"/>
<circle cx="1159.85" cy="295.20" r="17.00" fill="#262626" stroke="#ffd700" stroke-width="3.4"/>
<circle cx="1159.85" cy="285.90" r="3.60" fill="#ffd700"/>
<circle cx="1194.65" cy="330.10" r="17.00" fill="#262626" stroke="#ffd700" stroke-width="3.4"/>
<circle cx="1194.65" cy="320.60" r="3.60" fill="#ffd700"/>
<line x1="1187.91" y1="366.39" x2="1189.36" y2="361.92" stroke="#9c9c9c" stroke-width="1.0" stroke-linecap="butt"/>
<line x1="1205.16" y1="378.92" x2="1208.96" y2="376.16" stroke="#9c9c9c" stroke-width="1.0" stroke-linecap="butt"/>
<line x1="1211.75" y1="399.20" x2="1216.45" y2="399.20" stroke="#9c9c9c" stroke-width="1.0" stroke-linecap="butt"/>
<line x1="1205.16" y1="419.48" x2="1208.96" y2="422.24" stroke="#9c9c9c" stroke-width="1.0" stroke-linecap="butt"/>
<line x1="1166.59" y1="366.39" x2="1165.14" y2="361.92" stroke="#9c9c9c" stroke-width="1.0" stroke-linecap="butt"/>
<line x1="1149.34" y1="378.92" x2="1145.54" y2="376.16" stroke="#9c9c9c" stroke-width="1.0" stroke-linecap="butt"/>
<line x1="1142.75" y1="399.20" x2="1138.05" y2="399.20" stroke="#9c9c9c" stroke-width="1.0" stroke-linecap="butt"/>
<line x1="1149.34" y1="419.48" x2="1145.54" y2="422.24" stroke="#9c9c9c" stroke-width="1.0" stroke-linecap="butt"/>
<circle cx="1177.25" cy="399.20" r="26.55" fill="#262626" stroke="#ffd700" stroke-width="4.9"/>
<circle cx="1187.25" cy="409.60" r="3.60" fill="#ffd700"/>
<line x1="1187.91" y1="453.19" x2="1189.36" y2="448.72" stroke="#9c9c9c" stroke-width="1.0" stroke-linecap="butt"/>
<line x1="1205.16" y1="465.72" x2="1208.96" y2="462.96" stroke="#9c9c9c" stroke-width="1.0" stroke-linecap="butt"/>
<line x1="1211.75" y1="486.00" x2="1216.45" y2="486.00" stroke="#9c9c9c" stroke-width="1.0" stroke-linecap="butt"/>
<line x1="1205.16" y1="506.28" x2="1208.96" y2="509.04" stroke="#9c9c9c" stroke-width="1.0" stroke-linecap="butt"/>
<line x1="1166.59" y1="453.19" x2="1165.14" y2="448.72" stroke="#9c9c9c" stroke-width="1.0" stroke-linecap="butt"/>
<line x1="1149.34" y1="465.72" x2="1145.54" y2="462.96" stroke="#9c9c9c" stroke-width="1.0" stroke-linecap="butt"/>
<line x1="1142.75" y1="486.00" x2="1138.05" y2="486.00" stroke="#9c9c9c" stroke-width="1.0" stroke-linecap="butt"/>
<line x1="1149.34" y1="506.28" x2="1145.54" y2="509.04" stroke="#9c9c9c" stroke-width="1.0" stroke-linecap="butt"/>
<circle cx="1177.25" cy="486.00" r="26.55" fill="#262626" stroke="#ffd700" stroke-width="4.9"/>
<circle cx="1166.55" cy="496.40" r="3.60" fill="#ffd700"/>
<rect x="1147.05" y="537.00" width="60.40" height="26.00" rx="5" fill="#ffd700" />
<rect x="1151.35" y="541.30" width="51.80" height="17.40" rx="2.5" fill="#262626" />
<line x1="526.60" y1="272.00" x2="526.60" y2="551.00" stroke="#8a8a8a" stroke-width="2.4" stroke-linecap="round"/>
<line x1="613.35" y1="272.00" x2="613.35" y2="551.00" stroke="#8a8a8a" stroke-width="2.4" stroke-linecap="round"/>
<line x1="700.10" y1="272.00" x2="700.10" y2="551.00" stroke="#8a8a8a" stroke-width="2.4" stroke-linecap="round"/>
<line x1="786.85" y1="272.00" x2="786.85" y2="551.00" stroke="#8a8a8a" stroke-width="2.4" stroke-linecap="round"/>
<line x1="873.60" y1="272.00" x2="873.60" y2="551.00" stroke="#8a8a8a" stroke-width="2.4" stroke-linecap="round"/>
<line x1="960.35" y1="272.00" x2="960.35" y2="551.00" stroke="#8a8a8a" stroke-width="2.4" stroke-linecap="round"/>
<line x1="1047.10" y1="272.00" x2="1047.10" y2="551.00" stroke="#8a8a8a" stroke-width="2.4" stroke-linecap="round"/>
<line x1="1133.85" y1="272.00" x2="1133.85" y2="551.00" stroke="#8a8a8a" stroke-width="2.4" stroke-linecap="round"/>
<line x1="1220.60" y1="272.00" x2="1220.60" y2="551.00" stroke="#8a8a8a" stroke-width="2.4" stroke-linecap="round"/>
<line x1="1264.60" y1="269.00" x2="1264.60" y2="264.00" stroke="#9c9c9c" stroke-width="1.0" stroke-linecap="butt"/>
<line x1="1292.92" y1="283.43" x2="1296.96" y2="280.49" stroke="#9c9c9c" stroke-width="1.0" stroke-linecap="butt"/>
<line x1="1236.28" y1="283.43" x2="1232.24" y2="280.49" stroke="#9c9c9c" stroke-width="1.0" stroke-linecap="butt"/>
<line x1="1292.92" y1="324.57" x2="1296.96" y2="327.51" stroke="#9c9c9c" stroke-width="1.0" stroke-linecap="butt"/>
<line x1="1236.28" y1="324.57" x2="1232.24" y2="327.51" stroke="#9c9c9c" stroke-width="1.0" stroke-linecap="butt"/>
<circle cx="1264.60" cy="304.00" r="26.55" fill="#262626" stroke="#ffd700" stroke-width="4.9"/>
<circle cx="1264.60" cy="289.40" r="3.60" fill="#ffd700"/>
<rect x="1234.00" y="342.70" width="61.00" height="26.30" rx="5" fill="#ffd700" />
<rect x="1239.00" y="347.70" width="51.00" height="16.30" rx="2" fill="#262626" />
<line x1="1264.60" y1="351.20" x2="1264.60" y2="360.70" stroke="#ffd700" stroke-width="1.5" stroke-linecap="butt"/>
<rect x="1234.00" y="374.70" width="61.00" height="26.30" rx="5" fill="#8a7300" />
<rect x="1239.00" y="379.70" width="51.00" height="16.30" rx="2" fill="#161616" />
<text x="1264.60" y="393.20" font-family='"Liberation Sans", sans-serif' font-size="13" fill="#8a7300" text-anchor="middle" font-weight="normal" >2</text>
<rect x="1234.00" y="406.70" width="61.00" height="26.30" rx="5" fill="#8a7300" />
<rect x="1239.00" y="411.70" width="51.00" height="16.30" rx="2" fill="#161616" />
<text x="1264.60" y="425.20" font-family='"Liberation Sans", sans-serif' font-size="13" fill="#8a7300" text-anchor="middle" font-weight="normal" >3</text>
<rect x="1234.00" y="438.70" width="61.00" height="26.30" rx="5" fill="#8a7300" />
<rect x="1239.00" y="443.70" width="51.00" height="16.30" rx="2" fill="#161616" />
<text x="1264.60" y="457.20" font-family='"Liberation Sans", sans-serif' font-size="13" fill="#8a7300" text-anchor="middle" font-weight="normal" >4</text>
<rect x="1234.00" y="470.70" width="61.00" height="26.30" rx="5" fill="#8a7300" />
<rect x="1239.00" y="475.70" width="51.00" height="16.30" rx="2" fill="#161616" />
<text x="1264.60" y="489.20" font-family='"Liberation Sans", sans-serif' font-size="13" fill="#8a7300" text-anchor="middle" font-weight="normal" >5</text>
<rect x="1239.00" y="502.50" width="22.70" height="57.30" rx="5" fill="#ff0000" />
<rect x="1243.30" y="506.80" width="14.10" height="48.70" rx="3" fill="#262626" />
<path d="M1245.4,523.5 L1255.4,529.1 L1245.4,532.8 L1255.4,538.5" fill="none" stroke="#ff0000" stroke-width="1.9" stroke-linecap="butt" stroke-linejoin="miter"/>
<rect x="1268.00" y="502.50" width="22.70" height="57.30" rx="5" fill="#788a00" />
<rect x="1272.30" y="506.80" width="14.10" height="48.70" rx="3" fill="#161616" />
<path d="M1274.3,533.1 L1279,537.6 L1285.1,525" fill="none" stroke="#788a00" stroke-width="1.9" stroke-linecap="butt" stroke-linejoin="miter"/>
<rect x="476.80" y="608.10" width="29.00" height="15.50" rx="0" fill="#e9603f" />
<rect x="563.60" y="608.10" width="29.00" height="15.50" rx="0" fill="#e9603f" />
<rect x="650.40" y="608.10" width="29.00" height="15.50" rx="0" fill="#e9603f" />
<rect x="737.20" y="608.10" width="29.00" height="15.50" rx="0" fill="#e9603f" />
<rect x="824.00" y="608.10" width="29.00" height="15.50" rx="0" fill="#e9603f" />
<rect x="910.80" y="608.10" width="29.00" height="15.50" rx="0" fill="#e9603f" />
<rect x="997.60" y="608.10" width="29.00" height="15.50" rx="0" fill="#e9603f" />
<rect x="1084.40" y="608.10" width="29.00" height="15.50" rx="0" fill="#e9603f" />
<rect x="454.00" y="623.30" width="940.00" height="216.10" rx="0" fill="#4b4b4b" />
<rect x="425.00" y="617.00" width="29.00" height="228.20" rx="0" fill="#2c2c2c" />
<rect x="1394.00" y="617.00" width="29.00" height="228.20" rx="0" fill="#2c2c2c" />
<rect x="1423.00" y="767.40" width="14.30" height="28.40" rx="0" fill="#e9603f" />
<line x1="469.60" y1="641.40" x2="513.00" y2="641.40" stroke="#ff0000" stroke-width="3.2" stroke-linecap="round"/>
<line x1="556.40" y1="641.40" x2="599.80" y2="641.40" stroke="#7c302b" stroke-width="3.2" stroke-linecap="round"/>
<line x1="643.20" y1="641.40" x2="686.60" y2="641.40" stroke="#7c302b" stroke-width="3.2" stroke-linecap="round"/>
<line x1="730.00" y1="641.40" x2="773.40" y2="641.40" stroke="#7c302b" stroke-width="3.2" stroke-linecap="round"/>
<line x1="816.80" y1="641.40" x2="860.20" y2="641.40" stroke="#7c302b" stroke-width="3.2" stroke-linecap="round"/>
<line x1="903.60" y1="641.40" x2="947.00" y2="641.40" stroke="#7c302b" stroke-width="3.2" stroke-linecap="round"/>
<line x1="990.40" y1="641.40" x2="1033.80" y2="641.40" stroke="#7c302b" stroke-width="3.2" stroke-linecap="round"/>
<line x1="1077.20" y1="641.40" x2="1120.60" y2="641.40" stroke="#7c302b" stroke-width="3.2" stroke-linecap="round"/>
<rect x="1278.90" y="641.40" width="98.90" height="19.60" rx="3.5" fill="none" stroke="#8e8e8e" stroke-width="2"/>
<rect x="1329.96" y="659.00" width="12.81" height="4.00" rx="0" fill="#4b4b4b" />
<text x="1282.29" y="658.24" font-family='"Liberation Sans", sans-serif' font-size="16.8" fill="#8e8e8e" text-anchor="start" font-weight="normal" textLength="75.5" lengthAdjust="spacingAndGlyphs" stroke="#4b4b4b" stroke-width="0.4">harbinger</text>
<line x1="1361.45" y1="645.09" x2="1361.45" y2="658.24" stroke="#8e8e8e" stroke-width="2" stroke-linecap="butt"/>
<path d="M1366.3,645.1 L1374.2,651.6 L1366.3,658.2" fill="none" stroke="#8e8e8e" stroke-width="2" stroke-linecap="butt" stroke-linejoin="miter"/>
<path d="M1364.9,648.8 L1367.7,651.6 L1364.9,654.4" fill="none" stroke="#8e8e8e" stroke-width="1.6" stroke-linecap="butt" stroke-linejoin="miter"/>
<text x="1313.00" y="705.90" font-family='"Liberation Sans", sans-serif' font-size="20.5" fill="#f0bb8c" text-anchor="end" font-weight="normal" textLength="194" lengthAdjust="spacingAndGlyphs" stroke="#4b4b4b" stroke-width="0.3">Mini Rhythm Designer</text>
<text x="1328.30" y="705.60" font-family='"Liberation Sans", sans-serif' font-size="13.5" fill="#f0bb8c" text-anchor="start" font-weight="bold" textLength="51" lengthAdjust="spacingAndGlyphs" stroke="#4b4b4b" stroke-width="0.3">MRD-16</text>
<rect x="468.00" y="660.40" width="23.20" height="57.30" rx="5" fill="#ff0000" />
<rect x="472.50" y="664.90" width="14.20" height="48.30" rx="3" fill="#262626" />
<path d="M474.9,682.0 L484.9,687.6 L474.9,691.3 L484.9,697.0" fill="none" stroke="#ff0000" stroke-width="1.9" stroke-linecap="butt" stroke-linejoin="miter"/>
<rect x="503.00" y="660.40" width="23.00" height="57.30" rx="5" fill="#788a00" />
<rect x="507.50" y="664.90" width="14.00" height="48.30" rx="3" fill="#161616" />
<path d="M509.1,689.0 L514.0,694.5 L520.1,682.5" fill="none" stroke="#788a00" stroke-width="2" stroke-linecap="butt" stroke-linejoin="miter"/>
<rect x="537.80" y="660.40" width="22.80" height="57.30" rx="5" fill="#ffd700" />
<rect x="542.10" y="664.70" width="14.20" height="48.70" rx="3" fill="#262626" />
<path d="M553.2,683.1 L545.6,689.4 L553.2,695.9" fill="none" stroke="#ffd700" stroke-width="2" stroke-linecap="butt" stroke-linejoin="miter"/>
<rect x="572.50" y="660.40" width="22.90" height="57.30" rx="5" fill="#ffd700" />
<rect x="576.80" y="664.70" width="14.30" height="48.70" rx="3" fill="#262626" />
<path d="M580.2,683.1 L587.8,689.4 L580.2,695.9" fill="none" stroke="#ffd700" stroke-width="2" stroke-linecap="butt" stroke-linejoin="miter"/>
<rect x="607.00" y="660.40" width="22.80" height="57.30" rx="5" fill="#8a7300" />
<rect x="611.30" y="664.70" width="14.20" height="48.70" rx="3" fill="#161616" />
<circle cx="619.50" cy="686.60" r="3.60" fill="none" stroke="#8a7300" stroke-width="1.3"/>
<circle cx="617.90" cy="691.40" r="4.10" fill="none" stroke="#8a7300" stroke-width="1.3"/>
<rect x="641.90" y="660.40" width="57.70" height="23.10" rx="5" fill="#ffd700" />
<rect x="646.20" y="664.70" width="49.10" height="14.50" rx="3" fill="#262626" />
<line x1="665.20" y1="671.80" x2="676.20" y2="671.80" stroke="#ffd700" stroke-width="1.9" stroke-linecap="butt"/>
<line x1="670.70" y1="666.30" x2="670.70" y2="677.50" stroke="#ffd700" stroke-width="1.9" stroke-linecap="butt"/>
<rect x="641.90" y="695.30" width="57.70" height="22.40" rx="5" fill="#ffd700" />
<rect x="646.20" y="699.60" width="49.10" height="13.80" rx="3" fill="#262626" />
<line x1="665.10" y1="706.60" x2="676.80" y2="706.60" stroke="#ffd700" stroke-width="1.9" stroke-linecap="butt"/>
<rect x="711.00" y="660.40" width="35.00" height="57.30" rx="4.5" fill="#1b1b1b" />
<path d="M721.30,667.00 L736.30,667.00 L739.90,670.60 L739.90,708.40 L736.30,712.00 L721.30,712.00 L717.70,708.40 L717.70,670.60 Z M721.80,671.10 L721.80,707.90 L735.80,707.90 L735.80,671.10 Z" fill="#cfcfcf" fill-rule="evenodd"/>
<rect x="721.80" y="687.40" width="14.00" height="4.20" rx="0" fill="#232323" />
<polygon points="717.10,686.90 719.75,689.10 722.40,686.90 722.40,692.10 719.75,689.90 717.10,692.10" fill="#1b1b1b"/>
<polygon points="735.20,686.90 737.85,689.10 740.50,686.90 740.50,692.10 737.85,689.90 735.20,692.10" fill="#1b1b1b"/>
<rect x="757.40" y="660.40" width="23.10" height="57.30" rx="5" fill="#ffd700" />
<rect x="761.70" y="664.70" width="14.50" height="48.70" rx="3" fill="#262626" />
<circle cx="769.00" cy="689.60" r="3.60" fill="none" stroke="#ffd700" stroke-width="1.4"/>
<circle cx="821.10" cy="689.00" r="26.30" fill="#262626" stroke="#ffd700" stroke-width="4.6"/>
<circle cx="810.80" cy="699.00" r="3.60" fill="#ffd700"/>
<text x="792.10" y="670.30" font-family='"Liberation Sans", sans-serif' font-size="12" fill="#0c0c0c" text-anchor="middle" font-weight="normal" >2</text>
<text x="849.10" y="670.30" font-family='"Liberation Sans", sans-serif' font-size="12" fill="#0c0c0c" text-anchor="middle" font-weight="normal" >3</text>
<line x1="792.10" y1="707.10" x2="792.10" y2="715.50" stroke="#0c0c0c" stroke-width="1.3" stroke-linecap="butt"/>
<text x="849.10" y="715.50" font-family='"Liberation Sans", sans-serif' font-size="12" fill="#0c0c0c" text-anchor="middle" font-weight="normal" >4</text>
<rect x="862.00" y="660.30" width="57.50" height="57.50" rx="4" fill="#ffd700" />
<rect x="866.30" y="664.60" width="48.90" height="48.90" rx="1.5" fill="#262626" />
<circle cx="877.35" cy="697.55" r="4.80" fill="none" stroke="#ffd700" stroke-width="1.4"/>
<circle cx="903.65" cy="697.55" r="5.80" fill="#ffd700"/>
<path d="M876.5,686.5 C880.8,673.0 896.8,671.0 903.8,687.5" fill="none" stroke="#ffd700" stroke-width="1.6" stroke-linecap="round" stroke-linejoin="round"/>
<path d="M898.8,685.5 L904.0,687.8 L906.8,682.0" fill="none" stroke="#ffd700" stroke-width="1.6" stroke-linecap="round" stroke-linejoin="round"/>
<circle cx="960.20" cy="689.10" r="26.50" fill="#262626" stroke="#ffd700" stroke-width="4.6"/>
<circle cx="949.80" cy="699.10" r="3.60" fill="#ffd700"/>
<path d="M933.2,660.3 L928.0,664.5 L933.2,668.7" fill="none" stroke="#151515" stroke-width="1.3" stroke-linecap="butt" stroke-linejoin="miter"/>
<path d="M928.0,706.2 L933.2,710.4 L928.0,714.6" fill="none" stroke="#151515" stroke-width="1.3" stroke-linecap="butt" stroke-linejoin="miter"/>
<path d="M986.2,660.3 L997.2,668.7 M986.2,668.7 L997.2,660.3" fill="none" stroke="#151515" stroke-width="1.3" stroke-linecap="butt" stroke-linejoin="round"/>
<text x="991.70" y="714.60" font-family='"Liberation Sans", sans-serif' font-size="12" fill="#151515" text-anchor="middle" font-weight="normal" >?</text>
<rect x="467.90" y="750.20" width="911.80" height="57.50" rx="0" fill="#3e3e3e" />
<rect x="468.20" y="735.30" width="43.50" height="87.00" rx="4.5" fill="#e4e4e4" />
<polygon points="479.2,738.0999999999999 500.7,738.0999999999999 508.9,746.3 508.9,810.4999999999999 500.7,818.6999999999999 479.2,818.6999999999999 471.0,810.4999999999999 471.0,746.3" fill="#f5f5f5"/>
<polygon points="485.4,748.0999999999999 494.7,748.0999999999999 499.0,752.3999999999999 499.0,804.4 494.7,808.6999999999999 485.4,808.6999999999999 481.09999999999997,804.4 481.09999999999997,752.3999999999999" fill="#e4e4e4"/>
<rect x="526.07" y="735.30" width="43.50" height="87.00" rx="4.5" fill="#e4e4e4" />
<rect x="583.94" y="735.30" width="43.50" height="87.00" rx="4.5" fill="#e4e4e4" />
<rect x="641.81" y="735.30" width="43.50" height="87.00" rx="4.5" fill="#e4e4e4" />
<rect x="699.68" y="735.30" width="43.50" height="87.00" rx="4.5" fill="#f9f995" />
<rect x="757.55" y="735.30" width="43.50" height="87.00" rx="4.5" fill="#f9f995" />
<rect x="815.42" y="735.30" width="43.50" height="87.00" rx="4.5" fill="#f9f995" />
<rect x="873.29" y="735.30" width="43.50" height="87.00" rx="4.5" fill="#f9f995" />
<rect x="931.16" y="735.30" width="43.50" height="87.00" rx="4.5" fill="#ff9739" />
<rect x="989.03" y="735.30" width="43.50" height="87.00" rx="4.5" fill="#ff9739" />
<rect x="1046.90" y="735.30" width="43.50" height="87.00" rx="4.5" fill="#ff9739" />
<rect x="1104.77" y="735.30" width="43.50" height="87.00" rx="4.5" fill="#ff9739" />
<rect x="1162.64" y="735.30" width="43.50" height="87.00" rx="4.5" fill="#ff5a3f" />
<rect x="1220.51" y="735.30" width="43.50" height="87.00" rx="4.5" fill="#ff5a3f" />
<rect x="1278.38" y="735.30" width="43.50" height="87.00" rx="4.5" fill="#ff5a3f" />
<rect x="1336.25" y="735.30" width="43.50" height="87.00" rx="4.5" fill="#ff5a3f" />
<rect x="1292.80" y="749.80" width="14.00" height="58.00" rx="6" fill="#ff6d55" />
<rect x="479.00" y="866.10" width="29.00" height="15.50" rx="0" fill="#e9603f" />
<rect x="565.80" y="866.10" width="29.00" height="15.50" rx="0" fill="#e9603f" />
<rect x="652.60" y="866.10" width="29.00" height="15.50" rx="0" fill="#e9603f" />
<rect x="739.40" y="866.10" width="29.00" height="15.50" rx="0" fill="#e9603f" />
<rect x="826.20" y="866.10" width="29.00" height="15.50" rx="0" fill="#e9603f" />
<rect x="913.00" y="866.10" width="29.00" height="15.50" rx="0" fill="#e9603f" />
<rect x="999.80" y="866.10" width="29.00" height="15.50" rx="0" fill="#e9603f" />
<rect x="1086.60" y="866.10" width="29.00" height="15.50" rx="0" fill="#e9603f" />
<rect x="456.00" y="881.30" width="941.30" height="404.50" rx="0" fill="#4b4b4b" />
<rect x="427.10" y="875.10" width="28.90" height="415.90" rx="0" fill="#2c2c2c" />
<rect x="1397.30" y="875.10" width="28.20" height="415.90" rx="0" fill="#2c2c2c" />
<rect x="1425.50" y="1112.10" width="11.10" height="28.50" rx="0" fill="#e9603f" />
<line x1="472.20" y1="899.50" x2="514.80" y2="899.50" stroke="#ff0000" stroke-width="3.2" stroke-linecap="round"/>
<line x1="559.00" y1="899.50" x2="601.60" y2="899.50" stroke="#7c302b" stroke-width="3.2" stroke-linecap="round"/>
<line x1="645.80" y1="899.50" x2="688.40" y2="899.50" stroke="#7c302b" stroke-width="3.2" stroke-linecap="round"/>
<line x1="732.60" y1="899.50" x2="775.20" y2="899.50" stroke="#7c302b" stroke-width="3.2" stroke-linecap="round"/>
<line x1="819.40" y1="899.50" x2="862.00" y2="899.50" stroke="#7c302b" stroke-width="3.2" stroke-linecap="round"/>
<line x1="906.20" y1="899.50" x2="948.80" y2="899.50" stroke="#7c302b" stroke-width="3.2" stroke-linecap="round"/>
<line x1="993.00" y1="899.50" x2="1035.60" y2="899.50" stroke="#7c302b" stroke-width="3.2" stroke-linecap="round"/>
<line x1="1079.80" y1="899.50" x2="1122.40" y2="899.50" stroke="#7c302b" stroke-width="3.2" stroke-linecap="round"/>
<rect x="1284.20" y="894.60" width="99.30" height="18.90" rx="3.5" fill="none" stroke="#8e8e8e" stroke-width="2"/>
<rect x="1335.47" y="911.50" width="12.87" height="4.00" rx="0" fill="#4b4b4b" />
<text x="1287.61" y="910.86" font-family='"Liberation Sans", sans-serif' font-size="16.3" fill="#8e8e8e" text-anchor="start" font-weight="normal" textLength="75.8" lengthAdjust="spacingAndGlyphs" stroke="#4b4b4b" stroke-width="0.4">harbinger</text>
<line x1="1367.08" y1="898.14" x2="1367.08" y2="910.86" stroke="#8e8e8e" stroke-width="2" stroke-linecap="butt"/>
<path d="M1371.9,898.1 L1379.8,904.5 L1371.9,910.9" fill="none" stroke="#8e8e8e" stroke-width="2" stroke-linecap="butt" stroke-linejoin="miter"/>
<path d="M1370.5,901.8 L1373.4,904.5 L1370.5,907.2" fill="none" stroke="#8e8e8e" stroke-width="1.6" stroke-linecap="butt" stroke-linejoin="miter"/>
<text x="472.50" y="928.90" font-family='"Liberation Sans", sans-serif' font-size="21" fill="#f0bb8c" text-anchor="start" font-weight="normal" textLength="187.5" lengthAdjust="spacingAndGlyphs" stroke="#4b4b4b" stroke-width="0.3">Rhythm Designer Pro</text>
<text x="672.10" y="928.90" font-family='"Liberation Sans", sans-serif' font-size="14" fill="#f0bb8c" text-anchor="start" font-weight="bold" textLength="47.7" lengthAdjust="spacingAndGlyphs" stroke="#4b4b4b" stroke-width="0.3">RDP-32</text>
<rect x="474.00" y="956.00" width="376.00" height="35.00" rx="3" fill="#454545" />
<rect x="474.10" y="944.50" width="22.60" height="57.30" rx="5" fill="#8a7300" />
<rect x="478.40" y="948.80" width="14.00" height="48.70" rx="3" fill="#161616" />
<rect x="502.70" y="944.50" width="22.60" height="57.30" rx="5" fill="#ffd700" />
<rect x="507.00" y="948.80" width="14.00" height="48.70" rx="3" fill="#262626" />
<rect x="534.50" y="944.50" width="22.60" height="57.30" rx="5" fill="#ffd700" />
<rect x="538.80" y="948.80" width="14.00" height="48.70" rx="3" fill="#262626" />
<rect x="566.40" y="944.50" width="22.60" height="57.30" rx="5" fill="#ffd700" />
<rect x="570.70" y="948.80" width="14.00" height="48.70" rx="3" fill="#262626" />
<rect x="598.20" y="944.50" width="22.60" height="57.30" rx="5" fill="#ffd700" />
<rect x="602.50" y="948.80" width="14.00" height="48.70" rx="3" fill="#262626" />
<rect x="630.00" y="944.50" width="22.60" height="57.30" rx="5" fill="#ffd700" />
<rect x="634.30" y="948.80" width="14.00" height="48.70" rx="3" fill="#262626" />
<rect x="661.80" y="944.50" width="22.60" height="57.30" rx="5" fill="#ffd700" />
<rect x="666.10" y="948.80" width="14.00" height="48.70" rx="3" fill="#262626" />
<rect x="693.60" y="944.50" width="22.60" height="57.30" rx="5" fill="#ffd700" />
<rect x="697.90" y="948.80" width="14.00" height="48.70" rx="3" fill="#262626" />
<circle cx="486.30" cy="970.80" r="3.60" fill="none" stroke="#8a7300" stroke-width="1.3"/>
<circle cx="484.70" cy="975.60" r="4.10" fill="none" stroke="#8a7300" stroke-width="1.3"/>
<circle cx="513.90" cy="973.40" r="3.80" fill="none" stroke="#ffd700" stroke-width="1.4"/>
<text x="545.80" y="966.50" font-family='"Liberation Sans", sans-serif' font-size="10" fill="#ffd700" text-anchor="middle" font-weight="normal" >?</text>
<line x1="545.80" y1="969.00" x2="545.80" y2="976.50" stroke="#ffd700" stroke-width="1.1" stroke-linecap="butt"/>
<path d="M543.6,974.2 L545.8,976.8 L548,974.2" fill="none" stroke="#ffd700" stroke-width="1.1" stroke-linecap="round" stroke-linejoin="round"/>
<circle cx="545.80" cy="983.60" r="3.60" fill="none" stroke="#ffd700" stroke-width="1.4"/>
<path d="M572.3,971.5 L576,975 L582.5,967.5 M576,975 L583.5,971.5 M575.2,975.5 L574.5,978.5 L578.5,978 M572.5,971 L575.5,970.5" fill="none" stroke="#ffd700" stroke-width="1.3" stroke-linecap="round" stroke-linejoin="round"/>
<rect x="603.40" y="964.40" width="9.10" height="11.80" rx="1.5" fill="none" stroke="#ffd700" stroke-width="1.2"/>
<rect x="606.20" y="969.70" width="9.50" height="11.70" rx="1.5" fill="#262626" stroke="#ffd700" stroke-width="1.2"/>
<rect x="636.30" y="964.40" width="9.70" height="12.60" rx="1.5" fill="none" stroke="#ffd700" stroke-width="1.2"/>
<line x1="636.30" y1="967.30" x2="646.00" y2="967.30" stroke="#ffd700" stroke-width="1.0" stroke-linecap="butt"/>
<line x1="641.20" y1="970.00" x2="641.20" y2="982.00" stroke="#ffd700" stroke-width="1.3" stroke-linecap="butt"/>
<path d="M638,978.5 L641.2,982.2 L644.4,978.5" fill="none" stroke="#ffd700" stroke-width="1.3" stroke-linecap="round" stroke-linejoin="round"/>
<path d="M677.2,967.0 L669.6,973.3 L677.2,979.8" fill="none" stroke="#ffd700" stroke-width="2" stroke-linecap="butt" stroke-linejoin="miter"/>
<path d="M701.1,967.0 L708.7,973.3 L701.1,979.8" fill="none" stroke="#ffd700" stroke-width="2" stroke-linecap="butt" stroke-linejoin="miter"/>
<rect x="725.30" y="944.40" width="57.90" height="22.80" rx="5" fill="#ffd700" />
<rect x="729.60" y="948.70" width="49.30" height="14.20" rx="3" fill="#262626" />
<line x1="748.80" y1="956.20" x2="759.80" y2="956.20" stroke="#ffd700" stroke-width="1.9" stroke-linecap="butt"/>
<line x1="754.30" y1="950.60" x2="754.30" y2="961.80" stroke="#ffd700" stroke-width="1.9" stroke-linecap="butt"/>
<rect x="725.30" y="979.00" width="57.90" height="22.80" rx="5" fill="#ffd700" />
<rect x="729.60" y="983.30" width="49.30" height="14.20" rx="3" fill="#262626" />
<line x1="748.60" y1="990.30" x2="760.30" y2="990.30" stroke="#ffd700" stroke-width="1.9" stroke-linecap="butt"/>
<rect x="791.90" y="944.40" width="35.10" height="57.40" rx="4.5" fill="#1b1b1b" />
<path d="M802.20,951.00 L817.20,951.00 L820.80,954.60 L820.80,992.40 L817.20,996.00 L802.20,996.00 L798.60,992.40 L798.60,954.60 Z M802.70,955.10 L802.70,991.90 L816.70,991.90 L816.70,955.10 Z" fill="#cfcfcf" fill-rule="evenodd"/>
<rect x="802.70" y="971.40" width="14.00" height="4.20" rx="0" fill="#232323" />
<polygon points="798.00,970.90 800.65,973.10 803.30,970.90 803.30,976.10 800.65,973.90 798.00,976.10" fill="#1b1b1b"/>
<polygon points="816.10,970.90 818.75,973.10 821.40,970.90 821.40,976.10 818.75,973.90 816.10,976.10" fill="#1b1b1b"/>
<rect x="827.00" y="955.80" width="22.80" height="35.10" rx="3" fill="#454545" />
<g transform="translate(838.3,972.9) rotate(-90)">
<text x="0" y="3.1" font-family='"Liberation Sans", sans-serif' font-size="8.5" fill="#cfcfcf" text-anchor="middle" textLength="16.6" lengthAdjust="spacingAndGlyphs">Page</text>
</g>
<rect x="528.40" y="1022.40" width="156.00" height="34.40" rx="3" fill="#454545" />
<rect x="690.00" y="1022.40" width="297.00" height="34.40" rx="3" fill="#454545" />
<rect x="471.20" y="1011.20" width="57.20" height="57.20" rx="4" fill="#ffd700" />
<rect x="475.50" y="1015.50" width="48.60" height="48.60" rx="1.5" fill="#262626" />
<circle cx="486.40" cy="1048.30" r="4.80" fill="none" stroke="#ffd700" stroke-width="1.4"/>
<circle cx="512.70" cy="1048.30" r="5.80" fill="#ffd700"/>
<path d="M485.6,1037.3 C489.8,1023.8 505.8,1021.8 512.8,1038.3" fill="none" stroke="#ffd700" stroke-width="1.6" stroke-linecap="round" stroke-linejoin="round"/>
<path d="M507.8,1036.3 L513.0,1038.6 L515.8,1032.8" fill="none" stroke="#ffd700" stroke-width="1.6" stroke-linecap="round" stroke-linejoin="round"/>
<circle cx="566.10" cy="1039.80" r="26.40" fill="#262626" stroke="#ffd700" stroke-width="4.6"/>
<circle cx="556.00" cy="1050.00" r="3.60" fill="#ffd700"/>
<text x="540.10" y="1018.30" font-family='"Liberation Sans", sans-serif' font-size="11" fill="#0c0c0c" text-anchor="middle" font-weight="normal" >2</text>
<text x="591.10" y="1018.30" font-family='"Liberation Sans", sans-serif' font-size="11" fill="#0c0c0c" text-anchor="middle" font-weight="normal" >3</text>
<line x1="540.10" y1="1062.10" x2="540.10" y2="1069.80" stroke="#0c0c0c" stroke-width="1.3" stroke-linecap="butt"/>
<text x="591.10" y="1069.80" font-family='"Liberation Sans", sans-serif' font-size="11" fill="#0c0c0c" text-anchor="middle" font-weight="normal" >4</text>
<circle cx="632.60" cy="1039.80" r="26.40" fill="#262626" stroke="#ffd700" stroke-width="4.6"/>
<circle cx="622.50" cy="1050.00" r="3.60" fill="#ffd700"/>
<path d="M610.0,1010.1 L604.8,1013.8 L610.0,1017.4" fill="none" stroke="#151515" stroke-width="1.3" stroke-linecap="butt" stroke-linejoin="miter"/>
<path d="M604.8,1062.1 L610.0,1065.8 L604.8,1069.5" fill="none" stroke="#151515" stroke-width="1.3" stroke-linecap="butt" stroke-linejoin="miter"/>
<path d="M656.1,1010.1 L667.1,1017.4 M656.1,1017.4 L667.1,1010.1" fill="none" stroke="#151515" stroke-width="1.3" stroke-linecap="butt" stroke-linejoin="round"/>
<text x="661.60" y="1069.45" font-family='"Liberation Sans", sans-serif' font-size="11" fill="#151515" text-anchor="middle" font-weight="normal" >?</text>
<g transform="translate(673.5,1039.5) rotate(-90)">
<text x="0" y="3.2" font-family='"Liberation Sans", sans-serif' font-size="9" fill="#cfcfcf" text-anchor="middle" textLength="43.4" lengthAdjust="spacingAndGlyphs">Progression</text>
</g>
<rect x="690.90" y="1011.10" width="22.80" height="57.50" rx="5" fill="#ffd700" />
<rect x="695.20" y="1015.40" width="14.20" height="48.90" rx="3" fill="#262626" />
<rect x="722.50" y="1011.10" width="22.80" height="57.50" rx="5" fill="#ffd700" />
<rect x="726.80" y="1015.40" width="14.20" height="48.90" rx="3" fill="#262626" />
<rect x="754.60" y="1011.10" width="22.80" height="57.50" rx="5" fill="#ffd700" />
<rect x="758.90" y="1015.40" width="14.20" height="48.90" rx="3" fill="#262626" />
<rect x="786.10" y="1011.10" width="22.80" height="57.50" rx="5" fill="#ffd700" />
<rect x="790.40" y="1015.40" width="14.20" height="48.90" rx="3" fill="#262626" />
<rect x="818.20" y="1011.10" width="22.80" height="57.50" rx="5" fill="#ffd700" />
<rect x="822.50" y="1015.40" width="14.20" height="48.90" rx="3" fill="#262626" />
<line x1="698.30" y1="1033.00" x2="698.30" y2="1046.80" stroke="#ffd700" stroke-width="2.2" stroke-linecap="butt"/>
<path d="M707.4,1033 L699.6,1039.9 L707.4,1046.8" fill="none" stroke="#ffd700" stroke-width="2.2" stroke-linecap="butt" stroke-linejoin="miter"/>
<path d="M728.3,1033 L735.8,1039.9 L728.3,1046.8" fill="none" stroke="#ffd700" stroke-width="2.2" stroke-linecap="butt" stroke-linejoin="miter"/>
<line x1="737.70" y1="1033.00" x2="737.70" y2="1046.80" stroke="#ffd700" stroke-width="2.2" stroke-linecap="butt"/>
<text x="766.00" y="1044.00" font-family='"Liberation Sans", sans-serif' font-size="10.5" fill="#ffd700" text-anchor="middle" font-weight="normal" >32</text>
<text x="797.50" y="1044.00" font-family='"Liberation Sans", sans-serif' font-size="10.5" fill="#ffd700" text-anchor="middle" font-weight="normal" >16</text>
<text x="829.60" y="1044.00" font-family='"Liberation Sans", sans-serif' font-size="10.5" fill="#ffd700" text-anchor="middle" font-weight="normal" >8</text>
<g transform="translate(858.3,1039.5) rotate(-90)">
<text x="0" y="-2.3" font-family='"Liberation Sans", sans-serif' font-size="8" fill="#cfcfcf" text-anchor="middle" textLength="39.5" lengthAdjust="spacingAndGlyphs">Subsection</text>
<text x="0" y="8.0" font-family='"Liberation Sans", sans-serif' font-size="8" fill="#cfcfcf" text-anchor="middle" textLength="33.5" lengthAdjust="spacingAndGlyphs">Selection</text>
</g>
<rect x="878.60" y="1011.10" width="22.80" height="57.50" rx="5" fill="#ff0000" />
<rect x="883.10" y="1015.60" width="13.80" height="48.50" rx="3" fill="#262626" />
<path d="M885.1,1032.5 L895.1,1038.1 L885.1,1041.8 L895.1,1047.5" fill="none" stroke="#ff0000" stroke-width="1.9" stroke-linecap="butt" stroke-linejoin="miter"/>
<rect x="910.40" y="1011.10" width="22.80" height="57.50" rx="5" fill="#788a00" />
<rect x="914.90" y="1015.60" width="13.80" height="48.50" rx="3" fill="#161616" />
<path d="M916.5,1039.5 L921.4,1045.0 L927.5,1033.0" fill="none" stroke="#788a00" stroke-width="2" stroke-linecap="butt" stroke-linejoin="miter"/>
<rect x="942.30" y="1011.10" width="22.80" height="57.50" rx="5" fill="#0000a0" />
<rect x="946.80" y="1015.60" width="13.80" height="48.50" rx="3" fill="#161616" />
<line x1="953.70" y1="1034.00" x2="953.70" y2="1047.00" stroke="#0000c8" stroke-width="1.8" stroke-linecap="butt"/>
<path d="M949.2,1038.5 L953.7,1034 L958.2,1038.5" fill="none" stroke="#0000c8" stroke-width="1.8" stroke-linecap="butt" stroke-linejoin="miter"/>
<g transform="translate(976.9,1039.4) rotate(-90)">
<text x="0" y="3.1" font-family='"Liberation Sans", sans-serif' font-size="8.5" fill="#cfcfcf" text-anchor="middle" textLength="18" lengthAdjust="spacingAndGlyphs">Metr</text>
</g>
<rect x="1006.20" y="932.80" width="378.30" height="126.60" rx="2" fill="#454545" />
<line x1="1013.00" y1="939.90" x2="1336.75" y2="939.90" stroke="#e4e4e4" stroke-width="8" stroke-linecap="butt"/>
<circle cx="1013.00" cy="939.90" r="16.95" fill="#262626" stroke="#ffd700" stroke-width="3.5"/>
<circle cx="1013.00" cy="930.50" r="3.60" fill="#ffd700"/>
<circle cx="1059.25" cy="939.90" r="16.95" fill="#262626" stroke="#ffd700" stroke-width="3.5"/>
<circle cx="1059.25" cy="930.50" r="3.60" fill="#ffd700"/>
<circle cx="1105.50" cy="939.90" r="16.95" fill="#262626" stroke="#ffd700" stroke-width="3.5"/>
<circle cx="1105.50" cy="930.50" r="3.60" fill="#ffd700"/>
<circle cx="1151.75" cy="939.90" r="16.95" fill="#262626" stroke="#ffd700" stroke-width="3.5"/>
<circle cx="1151.75" cy="930.50" r="3.60" fill="#ffd700"/>
<circle cx="1198.00" cy="939.90" r="16.95" fill="#262626" stroke="#ffd700" stroke-width="3.5"/>
<circle cx="1198.00" cy="930.50" r="3.60" fill="#ffd700"/>
<circle cx="1244.25" cy="939.90" r="16.95" fill="#262626" stroke="#ffd700" stroke-width="3.5"/>
<circle cx="1244.25" cy="930.50" r="3.60" fill="#ffd700"/>
<circle cx="1290.50" cy="939.90" r="16.95" fill="#262626" stroke="#ffd700" stroke-width="3.5"/>
<circle cx="1290.50" cy="930.50" r="3.60" fill="#ffd700"/>
<circle cx="1336.75" cy="939.90" r="16.95" fill="#262626" stroke="#ffd700" stroke-width="3.5"/>
<circle cx="1336.75" cy="930.50" r="3.60" fill="#ffd700"/>
<line x1="1036.20" y1="977.50" x2="1359.95" y2="977.50" stroke="#f9f995" stroke-width="8" stroke-linecap="butt"/>
<circle cx="1036.20" cy="977.50" r="16.95" fill="#262626" stroke="#ffd700" stroke-width="3.5"/>
<circle cx="1036.20" cy="968.10" r="3.60" fill="#ffd700"/>
<circle cx="1082.45" cy="977.50" r="16.95" fill="#262626" stroke="#ffd700" stroke-width="3.5"/>
<circle cx="1082.45" cy="968.10" r="3.60" fill="#ffd700"/>
<circle cx="1128.70" cy="977.50" r="16.95" fill="#262626" stroke="#ffd700" stroke-width="3.5"/>
<circle cx="1128.70" cy="968.10" r="3.60" fill="#ffd700"/>
<circle cx="1174.95" cy="977.50" r="16.95" fill="#262626" stroke="#ffd700" stroke-width="3.5"/>
<circle cx="1174.95" cy="968.10" r="3.60" fill="#ffd700"/>
<circle cx="1221.20" cy="977.50" r="16.95" fill="#262626" stroke="#ffd700" stroke-width="3.5"/>
<circle cx="1221.20" cy="968.10" r="3.60" fill="#ffd700"/>
<circle cx="1267.45" cy="977.50" r="16.95" fill="#262626" stroke="#ffd700" stroke-width="3.5"/>
<circle cx="1267.45" cy="968.10" r="3.60" fill="#ffd700"/>
<circle cx="1313.70" cy="977.50" r="16.95" fill="#262626" stroke="#ffd700" stroke-width="3.5"/>
<circle cx="1313.70" cy="968.10" r="3.60" fill="#ffd700"/>
<circle cx="1359.95" cy="977.50" r="16.95" fill="#262626" stroke="#ffd700" stroke-width="3.5"/>
<circle cx="1359.95" cy="968.10" r="3.60" fill="#ffd700"/>
<line x1="1013.00" y1="1015.00" x2="1336.75" y2="1015.00" stroke="#ff9739" stroke-width="8" stroke-linecap="butt"/>
<circle cx="1013.00" cy="1015.00" r="16.95" fill="#262626" stroke="#ffd700" stroke-width="3.5"/>
<circle cx="1013.00" cy="1005.60" r="3.60" fill="#ffd700"/>
<circle cx="1059.25" cy="1015.00" r="16.95" fill="#262626" stroke="#ffd700" stroke-width="3.5"/>
<circle cx="1059.25" cy="1005.60" r="3.60" fill="#ffd700"/>
<circle cx="1105.50" cy="1015.00" r="16.95" fill="#262626" stroke="#ffd700" stroke-width="3.5"/>
<circle cx="1105.50" cy="1005.60" r="3.60" fill="#ffd700"/>
<circle cx="1151.75" cy="1015.00" r="16.95" fill="#262626" stroke="#ffd700" stroke-width="3.5"/>
<circle cx="1151.75" cy="1005.60" r="3.60" fill="#ffd700"/>
<circle cx="1198.00" cy="1015.00" r="16.95" fill="#262626" stroke="#ffd700" stroke-width="3.5"/>
<circle cx="1198.00" cy="1005.60" r="3.60" fill="#ffd700"/>
<circle cx="1244.25" cy="1015.00" r="16.95" fill="#262626" stroke="#ffd700" stroke-width="3.5"/>
<circle cx="1244.25" cy="1005.60" r="3.60" fill="#ffd700"/>
<circle cx="1290.50" cy="1015.00" r="16.95" fill="#262626" stroke="#ffd700" stroke-width="3.5"/>
<circle cx="1290.50" cy="1005.60" r="3.60" fill="#ffd700"/>
<circle cx="1336.75" cy="1015.00" r="16.95" fill="#262626" stroke="#ffd700" stroke-width="3.5"/>
<circle cx="1336.75" cy="1005.60" r="3.60" fill="#ffd700"/>
<line x1="1036.20" y1="1052.40" x2="1359.95" y2="1052.40" stroke="#ff5a3f" stroke-width="8" stroke-linecap="butt"/>
<circle cx="1036.20" cy="1052.40" r="16.95" fill="#262626" stroke="#ffd700" stroke-width="3.5"/>
<circle cx="1036.20" cy="1043.00" r="3.60" fill="#ffd700"/>
<circle cx="1082.45" cy="1052.40" r="16.95" fill="#262626" stroke="#ffd700" stroke-width="3.5"/>
<circle cx="1082.45" cy="1043.00" r="3.60" fill="#ffd700"/>
<circle cx="1128.70" cy="1052.40" r="16.95" fill="#262626" stroke="#ffd700" stroke-width="3.5"/>
<circle cx="1128.70" cy="1043.00" r="3.60" fill="#ffd700"/>
<circle cx="1174.95" cy="1052.40" r="16.95" fill="#262626" stroke="#ffd700" stroke-width="3.5"/>
<circle cx="1174.95" cy="1043.00" r="3.60" fill="#ffd700"/>
<circle cx="1221.20" cy="1052.40" r="16.95" fill="#262626" stroke="#ffd700" stroke-width="3.5"/>
<circle cx="1221.20" cy="1043.00" r="3.60" fill="#ffd700"/>
<circle cx="1267.45" cy="1052.40" r="16.95" fill="#262626" stroke="#ffd700" stroke-width="3.5"/>
<circle cx="1267.45" cy="1043.00" r="3.60" fill="#ffd700"/>
<circle cx="1313.70" cy="1052.40" r="16.95" fill="#262626" stroke="#ffd700" stroke-width="3.5"/>
<circle cx="1313.70" cy="1043.00" r="3.60" fill="#ffd700"/>
<circle cx="1359.95" cy="1052.40" r="16.95" fill="#262626" stroke="#ffd700" stroke-width="3.5"/>
<circle cx="1359.95" cy="1043.00" r="3.60" fill="#ffd700"/>
<g transform="translate(1371.0,1014.5) rotate(-90)">
<text x="0" y="-1.5" font-family='"Liberation Sans", sans-serif' font-size="8" fill="#cfcfcf" text-anchor="middle" textLength="27" lengthAdjust="spacingAndGlyphs">Voltage</text>
<text x="0" y="7.3" font-family='"Liberation Sans", sans-serif' font-size="8" fill="#cfcfcf" text-anchor="middle" textLength="24" lengthAdjust="spacingAndGlyphs">Power</text>
</g>
<rect x="470.70" y="1098.00" width="911.30" height="57.60" rx="0" fill="#3e3e3e" />
<rect x="470.70" y="1198.80" width="911.30" height="57.60" rx="0" fill="#3e3e3e" />
<rect x="470.80" y="1162.80" width="43.40" height="12.60" rx="0" fill="#ffffff" />
<rect x="470.80" y="1082.80" width="43.40" height="87.00" rx="4.5" fill="#e4e4e4" />
<polygon points="481.8,1085.6 503.20000000000005,1085.6 511.40000000000003,1093.8 511.40000000000003,1158.0 503.20000000000005,1166.2 481.8,1166.2 473.6,1158.0 473.6,1093.8" fill="#f5f5f5"/>
<polygon points="488.0,1095.6 497.20000000000005,1095.6 501.50000000000006,1099.8999999999999 501.50000000000006,1151.9 497.20000000000005,1156.2 488.0,1156.2 483.7,1151.9 483.7,1099.8999999999999" fill="#e4e4e4"/>
<rect x="470.80" y="1264.60" width="43.40" height="12.60" rx="0" fill="#ffffff" />
<rect x="470.80" y="1184.60" width="43.40" height="87.00" rx="4.5" fill="#ff9739" />
<rect x="528.68" y="1162.80" width="43.40" height="12.60" rx="0" fill="#ffffff" />
<rect x="528.68" y="1082.80" width="43.40" height="87.00" rx="4.5" fill="#e4e4e4" />
<rect x="528.68" y="1264.60" width="43.40" height="12.60" rx="0" fill="#ffffff" />
<rect x="528.68" y="1184.60" width="43.40" height="87.00" rx="4.5" fill="#ff9739" />
<rect x="586.56" y="1162.80" width="43.40" height="12.60" rx="0" fill="#ffffff" />
<rect x="586.56" y="1082.80" width="43.40" height="87.00" rx="4.5" fill="#e4e4e4" />
<rect x="586.56" y="1264.60" width="43.40" height="12.60" rx="0" fill="#ffffff" />
<rect x="586.56" y="1184.60" width="43.40" height="87.00" rx="4.5" fill="#ff9739" />
<rect x="644.44" y="1162.80" width="43.40" height="12.60" rx="0" fill="#ffffff" />
<rect x="644.44" y="1082.80" width="43.40" height="87.00" rx="4.5" fill="#e4e4e4" />
<rect x="644.44" y="1264.60" width="43.40" height="12.60" rx="0" fill="#ffffff" />
<rect x="644.44" y="1184.60" width="43.40" height="87.00" rx="4.5" fill="#ff9739" />
<rect x="702.32" y="1162.80" width="43.40" height="12.60" rx="0" fill="#ffffff" />
<rect x="702.32" y="1082.80" width="43.40" height="87.00" rx="4.5" fill="#e4e4e4" />
<rect x="702.32" y="1264.60" width="43.40" height="12.60" rx="0" fill="#ffffff" />
<rect x="702.32" y="1184.60" width="43.40" height="87.00" rx="4.5" fill="#ff9739" />
<rect x="760.20" y="1162.80" width="43.40" height="12.60" rx="0" fill="#ffffff" />
<rect x="760.20" y="1082.80" width="43.40" height="87.00" rx="4.5" fill="#e4e4e4" />
<rect x="760.20" y="1264.60" width="43.40" height="12.60" rx="0" fill="#ffffff" />
<rect x="760.20" y="1184.60" width="43.40" height="87.00" rx="4.5" fill="#ff9739" />
<rect x="818.08" y="1162.80" width="43.40" height="12.60" rx="0" fill="#ffffff" />
<rect x="818.08" y="1082.80" width="43.40" height="87.00" rx="4.5" fill="#e4e4e4" />
<rect x="818.08" y="1264.60" width="43.40" height="12.60" rx="0" fill="#ffffff" />
<rect x="818.08" y="1184.60" width="43.40" height="87.00" rx="4.5" fill="#ff9739" />
<rect x="875.96" y="1162.80" width="43.40" height="12.60" rx="0" fill="#ffffff" />
<rect x="875.96" y="1082.80" width="43.40" height="87.00" rx="4.5" fill="#e4e4e4" />
<rect x="875.96" y="1264.60" width="43.40" height="12.60" rx="0" fill="#ffffff" />
<rect x="875.96" y="1184.60" width="43.40" height="87.00" rx="4.5" fill="#ff9739" />
<rect x="933.84" y="1162.80" width="43.40" height="12.60" rx="0" fill="#ffffff" />
<rect x="933.84" y="1082.80" width="43.40" height="87.00" rx="4.5" fill="#f9f995" />
<rect x="933.84" y="1264.60" width="43.40" height="12.60" rx="0" fill="#ffffff" />
<rect x="933.84" y="1184.60" width="43.40" height="87.00" rx="4.5" fill="#ff5a3f" />
<rect x="991.72" y="1162.80" width="43.40" height="12.60" rx="0" fill="#ffffff" />
<rect x="991.72" y="1082.80" width="43.40" height="87.00" rx="4.5" fill="#f9f995" />
<rect x="991.72" y="1264.60" width="43.40" height="12.60" rx="0" fill="#ffffff" />
<rect x="991.72" y="1184.60" width="43.40" height="87.00" rx="4.5" fill="#ff5a3f" />
<rect x="1049.60" y="1162.80" width="43.40" height="12.60" rx="0" fill="#ffffff" />
<rect x="1049.60" y="1082.80" width="43.40" height="87.00" rx="4.5" fill="#f9f995" />
<rect x="1049.60" y="1264.60" width="43.40" height="12.60" rx="0" fill="#ffffff" />
<rect x="1049.60" y="1184.60" width="43.40" height="87.00" rx="4.5" fill="#ff5a3f" />
<rect x="1107.48" y="1162.80" width="43.40" height="12.60" rx="0" fill="#ffffff" />
<rect x="1107.48" y="1082.80" width="43.40" height="87.00" rx="4.5" fill="#f9f995" />
<rect x="1107.48" y="1264.60" width="43.40" height="12.60" rx="0" fill="#ffffff" />
<rect x="1107.48" y="1184.60" width="43.40" height="87.00" rx="4.5" fill="#ff5a3f" />
<rect x="1165.36" y="1162.80" width="43.40" height="12.60" rx="0" fill="#ffffff" />
<rect x="1165.36" y="1082.80" width="43.40" height="87.00" rx="4.5" fill="#f9f995" />
<rect x="1165.36" y="1264.60" width="43.40" height="12.60" rx="0" fill="#ffffff" />
<rect x="1165.36" y="1184.60" width="43.40" height="87.00" rx="4.5" fill="#ff5a3f" />
<rect x="1223.24" y="1162.80" width="43.40" height="12.60" rx="0" fill="#ffffff" />
<rect x="1223.24" y="1082.80" width="43.40" height="87.00" rx="4.5" fill="#f9f995" />
<rect x="1223.24" y="1264.60" width="43.40" height="12.60" rx="0" fill="#ffffff" />
<rect x="1223.24" y="1184.60" width="43.40" height="87.00" rx="4.5" fill="#ff5a3f" />
<rect x="1281.12" y="1162.80" width="43.40" height="12.60" rx="0" fill="#ffffff" />
<rect x="1281.12" y="1082.80" width="43.40" height="87.00" rx="4.5" fill="#f9f995" />
<rect x="1281.12" y="1264.60" width="43.40" height="12.60" rx="0" fill="#ffffff" />
<rect x="1281.12" y="1184.60" width="43.40" height="87.00" rx="4.5" fill="#ff5a3f" />
<rect x="1339.00" y="1162.80" width="43.40" height="12.60" rx="0" fill="#ffffff" />
<rect x="1339.00" y="1082.80" width="43.40" height="87.00" rx="4.5" fill="#f9f995" />
<rect x="1339.00" y="1264.60" width="43.40" height="12.60" rx="0" fill="#ffffff" />
<rect x="1339.00" y="1184.60" width="43.40" height="87.00" rx="4.5" fill="#ff5a3f" />
</svg>
</body></html>
